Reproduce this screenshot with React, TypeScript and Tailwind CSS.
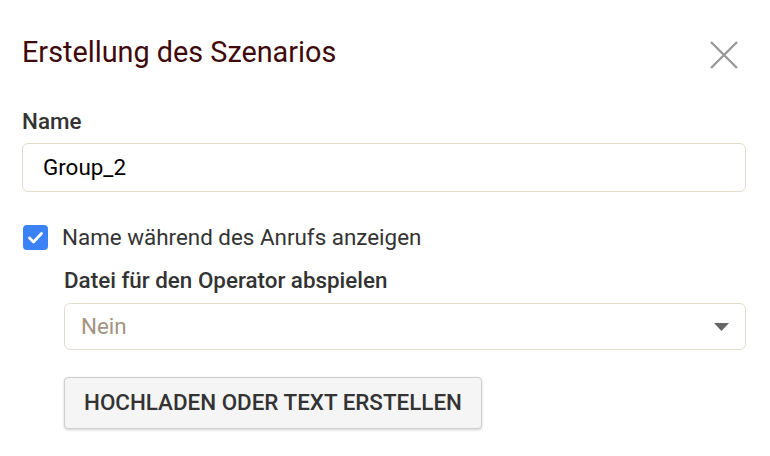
export default function App() {
  return (
    <div className="w-[770px] h-[456px] bg-white font-['Roboto',sans-serif] text-[#333]">
      <div className="pl-[22px] pr-[24px] pt-[34px]">
        {/* Header */}
        <div className="flex items-start justify-between">
          <h2 className="text-[28.8px] leading-[36px] text-[#3f0a0c]">Erstellung des Szenarios</h2>
          <button className="mr-[7px] mt-[6px] text-[#999]">
            <svg width="30" height="30" viewBox="0 0 30 30" fill="none">
              <path d="M2 2L28 28M28 2L2 28" stroke="currentColor" strokeWidth="2.4" />
            </svg>
          </button>
        </div>

        {/* Name */}
        <label className="mt-[38px] block text-[22.4px] leading-[26px] font-medium text-[#333]">Name</label>
        <div className="mt-[9px] h-[49px] rounded-[6px] border border-[#e2dccd] flex items-center px-[20px]">
          <span className="text-[22.4px] text-black">Group_2</span>
        </div>

        {/* Checkbox */}
        <div className="mt-[32px] flex items-center gap-[14px]">
          <span className="ml-px w-[25px] h-[25px] rounded-[4px] bg-[#3b82f6] flex items-center justify-center">
            <svg width="19" height="19" viewBox="0 0 19 19" fill="none">
              <path d="M3.5 10L7.5 14L15.5 5.5" stroke="white" strokeWidth="2.8" strokeLinecap="round" strokeLinejoin="round" />
            </svg>
          </span>
          <span className="text-[22.4px] leading-[26px] text-[#333]">Name während des Anrufs anzeigen</span>
        </div>

        {/* Operator file */}
        <div className="ml-[42px]">
          <label className="mt-[17px] block text-[22.4px] leading-[26px] font-medium text-[#333]">
            Datei für den Operator abspielen
          </label>
          <div className="mt-[10px] h-[47px] rounded-[6px] border border-[#e2dccd] flex items-center justify-between pl-[16px] pr-[16px]">
            <span className="text-[22.4px] text-[#a19480]">Nein</span>
            <svg width="15" height="8" viewBox="0 0 15 8">
              <path d="M0 0H15L7.5 8Z" fill="#666" />
            </svg>
          </div>
          <button className="mt-[27px] h-[52px] px-[19px] rounded-[4px] border border-[#cfcfcf] bg-[#f5f5f5] shadow-[0_1px_3px_rgba(0,0,0,0.18)] text-[22.4px] font-medium text-[#333]">
            HOCHLADEN ODER TEXT ERSTELLEN
          </button>
        </div>
      </div>
    </div>
  );
}
